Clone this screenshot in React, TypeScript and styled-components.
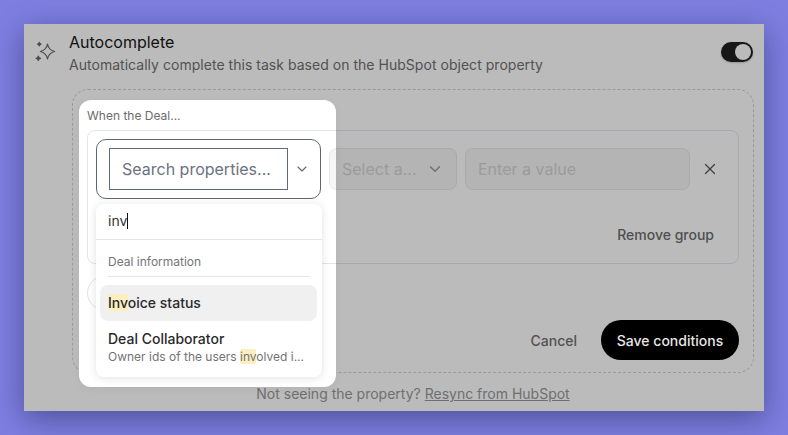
import React from "react";
import styled, { createGlobalStyle } from "styled-components";
import { ChevronDown, X } from "lucide-react";

const GlobalStyle = createGlobalStyle`
  html, body {
    margin: 0;
    height: 100%;
    overflow: hidden;
    background: #7d7ee0;
    font-family: Inter, "Liberation Sans", sans-serif;
  }
`;

const Card = styled.div`
  position: relative;
  box-sizing: border-box;
  width: 740px;
  height: 387px;
  margin: 24px 24px 0;
  padding: 9px 11px 0 11px;
  background: #bbbbbb;
  box-shadow: 0 8px 28px rgba(20, 20, 60, 0.42);
`;

const Header = styled.div`
  display: flex;
  align-items: flex-start;
  height: 56px;
`;

const IconSlot = styled.div`
  width: 34px;
  padding-top: 10px;
  color: #4a4a4a;
  display: flex;
`;

const HeaderText = styled.div`
  flex: 1;
`;

const Title = styled.div`
  font-size: 16px;
  line-height: 19px;
  color: #111111;
`;

const Subtitle = styled.div`
  margin-top: 3px;
  font-size: 14px;
  line-height: 20px;
  color: #525252;
  letter-spacing: 0.03px;
`;

const Toggle = styled.div`
  box-sizing: border-box;
  width: 32px;
  height: 20px;
  margin-top: 9px;
  border-radius: 10px;
  background: #171717;
  padding: 2px 2px 2px 14px;
  box-shadow: 0 1px 2px rgba(0, 0, 0, 0.2);
`;

const Knob = styled.div`
  width: 16px;
  height: 16px;
  border-radius: 50%;
  background: #bbbbbb;
`;

const Dashed = styled.div`
  position: relative;
  box-sizing: border-box;
  margin-left: 37px;
  width: 682px;
  height: 284px;
  padding: 0 14px;
  border: 1px dashed #9a9a9a;
  border-radius: 16px;
`;

const Spotlight = styled.div`
  position: absolute;
  left: 6px;
  top: 10px;
  width: 257px;
  height: 287px;
  border-radius: 12px;
  background: #ffffff;
  box-shadow: 0 2px 10px rgba(0, 0, 0, 0.04);
`;

const WhenLabel = styled.div`
  position: relative;
  z-index: 2;
  height: 40px;
  padding-top: 18px;
  box-sizing: border-box;
  font-size: 12px;
  line-height: 16px;
  color: #6b6b6b;
`;

const Group = styled.div`
  position: relative;
  z-index: 2;
  box-sizing: border-box;
  height: 134px;
  padding: 8px 24px 0 8px;
  border: 1px solid rgba(60, 60, 110, 0.14);
  border-radius: 8px;
`;

const ConditionRow = styled.div`
  display: flex;
  align-items: center;
  gap: 8px;
`;

const Trigger = styled.div`
  box-sizing: border-box;
  width: 225px;
  height: 60px;
  padding: 0 10px 0 12px;
  flex: none;
  display: flex;
  align-items: center;
  justify-content: space-between;
  border: 1px solid #5f6670;
  border-radius: 10px;
  color: #5f6b7a;
`;

const SearchBox = styled.div`
  box-sizing: border-box;
  width: 179px;
  height: 42px;
  padding-left: 12px;
  display: flex;
  align-items: center;
  border: 1px solid #5f6b7a;
  font-size: 16px;
  color: #6b7280;
  white-space: nowrap;
`;

const DisabledField = styled.div<{ $width: number }>`
  box-sizing: border-box;
  width: ${(p) => p.$width}px;
  flex: none;
  height: 42px;
  padding: 0 12px;
  display: flex;
  align-items: center;
  justify-content: space-between;
  background: rgba(0, 0, 0, 0.035);
  border: 1px solid rgba(0, 0, 0, 0.06);
  border-radius: 8px;
  font-size: 16px;
  color: #9b9b9b;
  white-space: nowrap;
`;

const RemoveCondition = styled.div`
  display: flex;
  margin-left: 3px;
  color: #3f3f3f;
`;

const RemoveGroup = styled.div`
  margin-top: 26px;
  text-align: right;
  font-size: 14px;
  font-weight: 500;
  line-height: 20px;
  color: #4f4f4f;
`;

const AddPill = styled.div`
  position: relative;
  z-index: 2;
  box-sizing: border-box;
  width: 120px;
  height: 34px;
  margin-top: 12px;
  border: 1px solid rgba(60, 60, 110, 0.14);
  border-radius: 17px;
`;

const Actions = styled.div`
  display: flex;
  justify-content: flex-end;
  align-items: center;
  gap: 24px;
  margin-top: 10px;
`;

const Cancel = styled.div`
  font-size: 14px;
  font-weight: 500;
  color: #525252;
`;

const Save = styled.div`
  box-sizing: border-box;
  height: 40px;
  width: 138px;
  display: flex;
  align-items: center;
  justify-content: center;
  background: #000000;
  border-radius: 20px;
  font-size: 14px;
  font-weight: 500;
  color: #e6e6e6;
`;

const Footer = styled.div`
  margin: 11px 0 0 37px;
  width: 682px;
  text-align: center;
  font-size: 14px;
  line-height: 20px;
  color: #6f6f6f;
`;

const FooterLink = styled.span`
  text-decoration: underline;
`;

const Dropdown = styled.div`
  position: absolute;
  z-index: 3;
  left: 72px;
  top: 180px;
  width: 226px;
  height: 173px;
  box-sizing: border-box;
  background: #ffffff;
  border-radius: 8px;
  box-shadow: 0 1px 8px rgba(0, 0, 0, 0.12);
`;

const SearchRow = styled.div`
  height: 36px;
  box-sizing: border-box;
  padding: 0 12px 2px;
  display: flex;
  align-items: center;
  border-bottom: 1px solid #e5e5ec;
  font-size: 14px;
  color: #333333;
`;

const Caret = styled.span`
  display: inline-block;
  width: 1px;
  height: 16px;
  background: #111111;
`;

const GroupLabel = styled.div`
  margin: 0 12px;
  height: 37px;
  box-sizing: border-box;
  padding-top: 14px;
  font-size: 12px;
  line-height: 16px;
  color: #757575;
  border-bottom: 1px solid #e5e5ec;
`;

const Option = styled.div<{ $active?: boolean }>`
  margin: ${(p) => (p.$active ? "8px 5px 0 4px" : "0 4px")};
  padding: 0 8px;
  height: ${(p) => (p.$active ? "36px" : "52px")};
  box-sizing: border-box;
  display: flex;
  flex-direction: column;
  justify-content: center;
  background: ${(p) => (p.$active ? "#f0f0f0" : "transparent")};
  border-radius: 8px;
`;

const OptionName = styled.div`
  font-size: 14px;
  font-weight: 500;
  line-height: 18px;
  color: #2a2a2a;
`;

const OptionDesc = styled.div`
  margin-top: 1px;
  font-size: 12px;
  line-height: 16px;
  color: #737373;
  white-space: nowrap;
`;

const Match = styled.mark`
  background: #fdeec0;
  color: inherit;
  border-radius: 2px;
`;

const SparkleIcon = styled.svg`
  overflow: visible;
`;

const Sparkle = () => (
  <SparkleIcon width="22" height="21" viewBox="0 0 22 21" fill="none" stroke="currentColor" strokeWidth="1.2" strokeLinejoin="round">
    <path d="M12.500 1c.7 4.300 2.500 6.100 7 7.500-4.500 1.400-6.300 3.200-7 7.500-.7-4.300-2.500-6.100-7-7.500 4.500-1.400 6.300-3.200 7-7.500z" />
    <path d="M4.300 -.6c.2 1.200.6 1.600 1.700 1.700-1.100.2-1.500.6-1.700 1.700-.2-1.100-.6-1.500-1.700-1.700 1.100-.1 1.500-.5 1.700-1.700z" fill="currentColor" />
    <path d="M3.300 13c.2 1.400.8 2 2.200 2.300-1.400.2-2 .8-2.200 2.200-.2-1.400-.8-2-2.200-2.200 1.400-.3 2-.9 2.200-2.300z" fill="currentColor" />
  </SparkleIcon>
);

export default function App() {
  return (
    <>
      <GlobalStyle />
      <Card>
        <Header>
          <IconSlot>
            <Sparkle />
          </IconSlot>
          <HeaderText>
            <Title>Autocomplete</Title>
            <Subtitle>Automatically complete this task based on the HubSpot object property</Subtitle>
          </HeaderText>
          <Toggle>
            <Knob />
          </Toggle>
        </Header>
        <Dashed>
          <Spotlight />
          <WhenLabel>When the Deal...</WhenLabel>
          <Group>
            <ConditionRow>
              <Trigger>
                <SearchBox>Search properties...</SearchBox>
                <ChevronDown size={16} strokeWidth={1.75} />
              </Trigger>
              <DisabledField $width={128}>
                Select a...
                <ChevronDown size={18} strokeWidth={2} color="#6b7280" />
              </DisabledField>
              <DisabledField $width={225}>Enter a value</DisabledField>
              <RemoveCondition>
                <X size={18} strokeWidth={1.75} />
              </RemoveCondition>
            </ConditionRow>
            <RemoveGroup>Remove group</RemoveGroup>
          </Group>
          <AddPill />
          <Actions>
            <Cancel>Cancel</Cancel>
            <Save>Save conditions</Save>
          </Actions>
        </Dashed>
        <Footer>
          Not seeing the property? <FooterLink>Resync from HubSpot</FooterLink>
        </Footer>
        <Dropdown>
          <SearchRow>
            inv
            <Caret />
          </SearchRow>
          <GroupLabel>Deal information</GroupLabel>
          <Option $active>
            <OptionName>
              <Match>Inv</Match>oice status
            </OptionName>
          </Option>
          <Option>
            <OptionName>Deal Collaborator</OptionName>
            <OptionDesc>
              Owner ids of the users <Match>inv</Match>olved i...
            </OptionDesc>
          </Option>
        </Dropdown>
      </Card>
    </>
  );
}
